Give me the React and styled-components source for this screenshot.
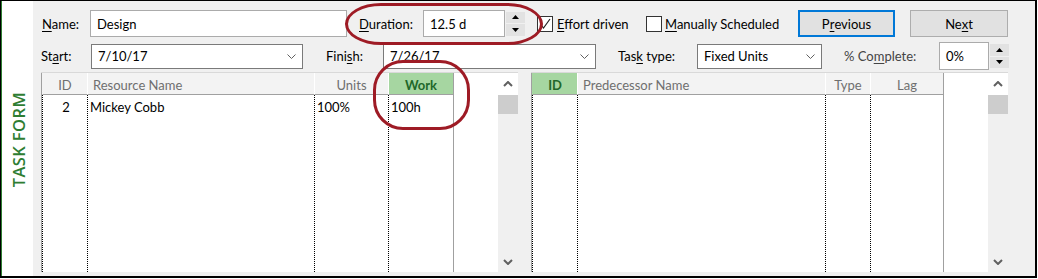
import React from "react";
import styled, { createGlobalStyle } from "styled-components";

const GlobalStyle = createGlobalStyle`
  html, body { margin: 0; padding: 0; background: #ffffff; }
  body { font-family: Lato, "Liberation Sans", sans-serif; font-size: 13px; color: #000; }
  u { text-decoration: underline; text-underline-offset: 2px; text-decoration-thickness: 1px; }
`;

const Frame = styled.div`
  position: relative;
  width: 1034px;
  height: 275px;
  border-top: 1px solid #000;
  border-left: 1px solid #000;
  border-right: 2px solid #000;
  border-bottom: 2px solid #000;
  display: flex;
  overflow: hidden;
`;

const Side = styled.div`
  width: 31px;
  border-left: 1px solid #2e7d32;
  background: #ffffff;
  display: flex;
  align-items: center;
  justify-content: center;
`;

const SideTitle = styled.div`
  writing-mode: vertical-rl;
  transform: rotate(180deg);
  font-family: "Open Sans", sans-serif;
  font-weight: 600;
  font-size: 16.5px;
  letter-spacing: 0.4px;
  color: #2e7d32;
  margin-top: 2px;
  margin-left: 1px;
`;

const Main = styled.div`
  flex: 1;
  background: #f0f0f0;
  padding: 9px 0 4px 8px;
  display: flex;
  flex-direction: column;
`;

const Row = styled.div`
  display: flex;
  align-items: center;
  height: ${(p) => p.$h}px;
  margin-top: ${(p) => p.$mt || 0}px;
`;

const Label = styled.div`
  width: ${(p) => p.$w}px;
  margin-left: ${(p) => p.$ml || 0}px;
  color: ${(p) => (p.$muted ? "#444" : "#000")};
  white-space: nowrap;
  flex-shrink: 0;
`;

const TextBox = styled.div`
  box-sizing: border-box;
  width: ${(p) => p.$w}px;
  height: ${(p) => p.$h}px;
  background: #fff;
  border: 1px solid #ababab;
  padding-left: 6px;
  display: flex;
  align-items: center;
  flex-shrink: 0;
`;

const Combo = styled.div`
  box-sizing: border-box;
  width: ${(p) => p.$w}px;
  height: 25px;
  background: #fff;
  border: 1px solid #7a7a7a;
  padding: 0 6px;
  display: flex;
  align-items: center;
  justify-content: space-between;
  flex-shrink: 0;
`;

const Spinner = styled.div`
  box-sizing: border-box;
  width: 19px;
  height: 24px;
  margin-left: 1px;
  display: flex;
  flex-direction: column;
  gap: 1px;
  flex-shrink: 0;
`;

const SpinButton = styled.div`
  flex: 1;
  background: #e2e2e2;
  display: flex;
  align-items: center;
  justify-content: center;
`;

const CheckBox = styled.div`
  box-sizing: border-box;
  width: 16px;
  height: 16px;
  margin-left: ${(p) => p.$ml}px;
  margin-right: ${(p) => p.$mr}px;
  background: #fff;
  border: 1px solid #333;
  display: flex;
  align-items: center;
  justify-content: center;
  flex-shrink: 0;
`;

const Button = styled.div`
  box-sizing: border-box;
  width: ${(p) => p.$w}px;
  height: 27px;
  margin-left: ${(p) => p.$ml || 0}px;
  background: #e1e1e1;
  border: ${(p) => (p.$focus ? "2px solid #0078d7" : "1px solid #adadad")};
  display: flex;
  align-items: center;
  justify-content: center;
  flex-shrink: 0;
`;

const GridArea = styled.div`
  display: flex;
  height: 200px;
  margin-top: 2px;
`;

const Panel = styled.div`
  display: flex;
  margin-left: ${(p) => p.$ml || 0}px;
  border-top: 1px solid #d9d9d9;
`;

const Table = styled.div`
  display: grid;
  grid-template-columns: ${(p) => p.$cols};
  grid-template-rows: 22px 1fr;
  border-left: 1px solid #a0a0a0;
  border-right: 1px solid #a0a0a0;
  background: #fff;
`;

const HeadCell = styled.div`
  background: ${(p) => (p.$hl ? "#a6d6a1" : "#f3f3f3")};
  color: ${(p) => (p.$hl ? "#21672a" : "#6f6f6f")};
  font-weight: ${(p) => (p.$hl ? 700 : 400)};
  border-left: 1px solid ${(p) => (p.$first ? "transparent" : "#ffffff")};
  border-bottom: 1px solid #a0a0a0;
  display: flex;
  align-items: center;
  justify-content: ${(p) => p.$align || "center"};
  padding: 3px 0 0 ${(p) => (p.$align === "flex-start" ? 5 : 0)}px;
  white-space: nowrap;
`;

const BodyCol = styled.div`
  border-left: 1px dotted #000;
  padding: 4px 0 0 ${(p) => p.$pl || 2}px;
  text-align: ${(p) => p.$align || "left"};
  white-space: nowrap;
`;

const Filler = styled.div`
  width: 44px;
  background: #fff;
`;

const ScrollBar = styled.div`
  width: 20px;
  background: #f0f0f0;
  display: flex;
  flex-direction: column;
`;

const ScrollArrow = styled.div`
  height: ${(p) => p.$h}px;
  background: ${(p) => p.$bg || "transparent"};
  display: flex;
  align-items: center;
  justify-content: center;
`;

const Thumb = styled.div`
  height: 19px;
  background: #cdcdcd;
`;

const Track = styled.div`
  flex: 1;
`;

const Ring = styled.div`
  position: absolute;
  box-sizing: border-box;
  left: ${(p) => p.$x}px;
  top: ${(p) => p.$y}px;
  width: ${(p) => p.$w}px;
  height: ${(p) => p.$h}px;
  border: 3px solid #9e1b25;
  border-radius: ${(p) => p.$r};
  pointer-events: none;
`;

const Chevron = () => (
  <svg width="9" height="5" viewBox="0 0 9 5">
    <polyline points="0.5,0.5 4.5,4.5 8.5,0.5" fill="none" stroke="#606060" strokeWidth="1" />
  </svg>
);

const Tri = ({ down }) => (
  <svg width="7" height="4" viewBox="0 0 7 4">
    <polygon points={down ? "0,0 7,0 3.5,4" : "0,4 7,4 3.5,0"} fill="#000" />
  </svg>
);

const ScrollChevron = ({ down }) => (
  <svg width="10" height="6" viewBox="0 0 10 6">
    <polyline points={down ? "1,1 5,5 9,1" : "1,5 5,1 9,5"} fill="none" stroke="#606060" strokeWidth="2" />
  </svg>
);

const Check = () => (
  <svg width="12" height="12" viewBox="0 0 12 12">
    <polyline points="1.5,6 4.5,10 11,1" fill="none" stroke="#222" strokeWidth="1.2" />
  </svg>
);

const SpinBox = () => (
  <Spinner>
    <SpinButton><Tri /></SpinButton>
    <SpinButton><Tri down /></SpinButton>
  </Spinner>
);

const VScroll = () => (
  <ScrollBar>
    <ScrollArrow $h={22} $bg="#ffffff"><ScrollChevron /></ScrollArrow>
    <Thumb />
    <Track />
    <ScrollArrow $h={20}><ScrollChevron down /></ScrollArrow>
  </ScrollBar>
);

export default function App() {
  return (
    <>
      <GlobalStyle />
      <Frame>
        <Side>
          <SideTitle>TASK FORM</SideTitle>
        </Side>
        <Main>
          <Row $h={27}>
            <Label $w={48} $ml={1}><u>N</u>ame:</Label>
            <TextBox $w={257} $h={27}>Design</TextBox>
            <Label $w={64} $ml={12}><u>D</u>uration:</Label>
            <TextBox $w={82} $h={27}>12.5 d</TextBox>
            <SpinBox />
            <CheckBox $ml={12} $mr={4}><Check /></CheckBox>
            <Label $w={89}><u>E</u>ffort driven</Label>
            <CheckBox $ml={0} $mr={3} />
            <Label $w={133}><u>M</u>anually Scheduled</Label>
            <Button $w={97} $focus>P<u>r</u>evious</Button>
            <Button $w={98} $ml={15}>Ne<u>x</u>t</Button>
          </Row>
          <Row $h={28} $mt={5}>
            <Label $w={50}>St<u>a</u>rt:</Label>
            <Combo $w={212}>7/10/17<Chevron /></Combo>
            <Label $w={57} $ml={23}>Fini<u>s</u>h:</Label>
            <Combo $w={213}>7/26/17<Chevron /></Combo>
            <Label $w={79} $ml={22}>Tas<u>k</u> type:</Label>
            <Combo $w={125}>Fixed Units<Chevron /></Combo>
            <Label $w={95} $ml={22} $muted>% Co<u>m</u>plete:</Label>
            <TextBox $w={50} $h={28}>0%</TextBox>
            <SpinBox />
          </Row>
          <GridArea>
            <Panel>
              <Table $cols="45px 227px 74px 65px">
                <HeadCell $first>ID</HeadCell>
                <HeadCell $align="flex-start">Resource Name</HeadCell>
                <HeadCell>Units</HeadCell>
                <HeadCell $hl>Work</HeadCell>
                <BodyCol $align="center">2</BodyCol>
                <BodyCol>Mickey Cobb</BodyCol>
                <BodyCol>100%</BodyCol>
                <BodyCol>100h</BodyCol>
              </Table>
              <Filler />
              <VScroll />
            </Panel>
            <Panel $ml={13}>
              <Table $cols="45px 248px 45px 73px">
                <HeadCell $first $hl>ID</HeadCell>
                <HeadCell $align="flex-start">Predecessor Name</HeadCell>
                <HeadCell>Type</HeadCell>
                <HeadCell>Lag</HeadCell>
                <BodyCol />
                <BodyCol />
                <BodyCol />
                <BodyCol />
              </Table>
              <Filler />
              <VScroll />
            </Panel>
          </GridArea>
        </Main>
        <Ring $x={344} $y={2} $w={198} $h={42} $r="36px / 21px" />
        <Ring $x={372} $y={59} $w={97} $h={70} $r="30px" />
      </Frame>
    </>
  );
}
